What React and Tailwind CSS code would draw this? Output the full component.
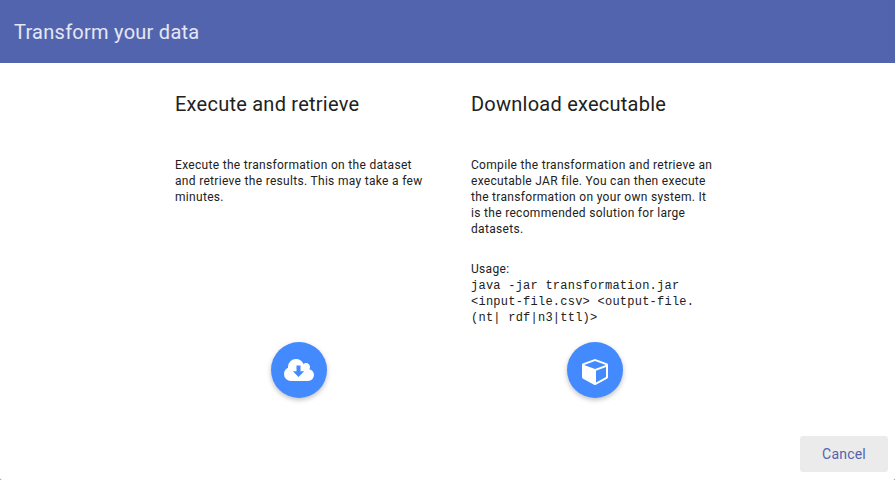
function CloudDownloadIcon() {
  return (
    <svg viewBox="0 128 1920 1408" className="h-[22px] w-[30px]" fill="currentColor" fillRule="evenodd">
      <path d="M800 544h256v368h232l-360 364-360-364h232zM1920 1152q0 159-112.5 271.5t-271.5 112.5h-1088q-185 0-316.5-131.5t-131.5-316.5q0-130 70-240t188-165q-2-30-2-43 0-212 150-362t362-150q156 0 285.5 87t188.5 231q71-62 166-62 106 0 181 75t75 181q0 76-41 138 130 31 213.5 135.5t83.5 238.5z" />
    </svg>
  );
}

function CubeIcon() {
  return (
    <svg viewBox="0 128 1664 1664" className="mt-1 mr-px size-[26px]" fill="currentColor">
      <path d="M896 1629l640-349v-636l-640 233v752zm-64-865l698-254-698-254-698 254zm832-252v768q0 35-18 65t-49 47l-704 384q-28 16-61 16t-61-16l-704-384q-31-17-49-47t-18-65v-768q0-40 23-73t61-47l704-256q22-8 44-8t44 8l704 256q38 14 61 47t23 73z" />
    </svg>
  );
}

function Action({ title, text, usage, icon }) {
  return (
    <section className="flex h-[335px] w-[248px] flex-col">
      <h2 className="h-[66px] whitespace-nowrap text-[20px] leading-[26px] tracking-[0.24px]">{title}</h2>
      <div className="text-[12px] leading-4 tracking-[0.31px]">
        {text.map((t) => <p key={t} className="whitespace-nowrap">{t}</p>)}
        {usage && (
          <>
            <p className="mt-6">Usage:</p>
            <div className="pt-px font-['Liberation_Mono',monospace] tracking-[0.24px]">
              {usage.map((t) => <p key={t} className="whitespace-nowrap">{t}</p>)}
            </div>
          </>
        )}
      </div>
      <button className="mt-auto mb-[28px] flex size-14 shrink-0 items-center justify-center self-center rounded-full bg-[#448aff] text-white shadow-[0_2px_5px_0_rgba(0,0,0,0.26)]">
        {icon}
      </button>
    </section>
  );
}

export default function App() {
  return (
    <div className="h-[480px] w-[895px] bg-[#8a8a8a]">
      <div className="flex h-full flex-col rounded-b-[2px] bg-white font-['Roboto',sans-serif] text-[#212121]">
        <header className="flex h-[63px] shrink-0 items-center bg-[#5264ae] px-[14px] text-[20px] tracking-[0.26px] text-white/85">
          Transform your data
        </header>
        <main className="flex flex-1 gap-12 pt-7 pl-[175px]">
          <Action
            title="Execute and retrieve"
            text={["Execute the transformation on the dataset", "and retrieve the results. This may take a few", "minutes."]}
            icon={<CloudDownloadIcon />}
          />
          <Action
            title="Download executable"
            text={["Compile the transformation and retrieve an", "executable JAR file. You can then execute", "the transformation on your own system. It", "is the recommended solution for large", "datasets."]}
            usage={["java -jar transformation.jar", "<input-file.csv> <output-file.", "(nt| rdf|n3|ttl)>"]}
            icon={<CubeIcon />}
          />
        </main>
        <footer className="flex h-11 shrink-0 justify-end pr-[7px]">
          <button className="h-9 w-[88px] rounded-[3px] bg-[#ebebeb] text-[14px] tracking-[0.2px] text-[#5264ae]">Cancel</button>
        </footer>
      </div>
    </div>
  );
}
